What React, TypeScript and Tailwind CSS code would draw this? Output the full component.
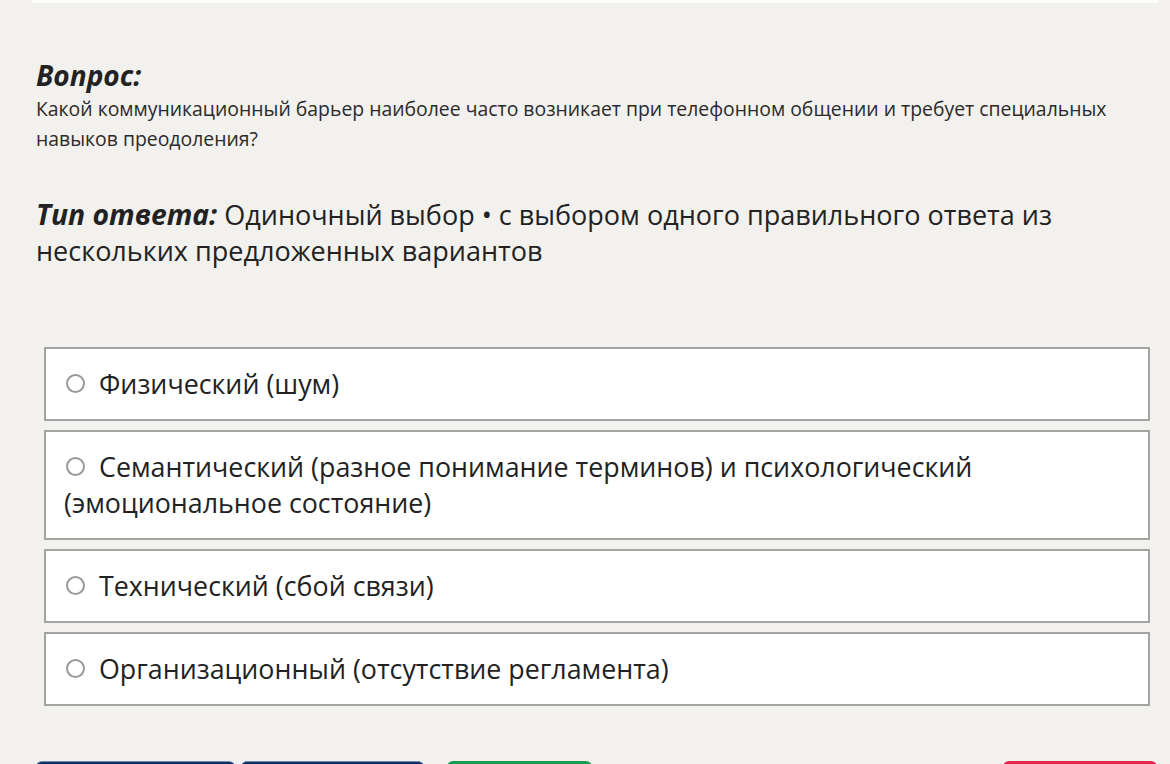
import React from "react";

const options = [
  "Физический (шум)",
  "Семантический (разное понимание терминов) и психологический (эмоциональное состояние)",
  "Технический (сбой связи)",
  "Организационный (отсутствие регламента)",
];

export default function App() {
  return (
    <div
      className="w-[1170px] h-[764px] overflow-hidden bg-[#f2f1ee] text-[#222222]"
      style={{ fontFamily: '"Open Sans", "Noto Sans", sans-serif' }}
    >
      <div className="mx-[32px] w-[1126px] h-[3px] bg-[#fdfdfb]" />
      <div className="px-[36px]">
        <h2 className="mt-[55px] text-[28px] leading-[34px] font-bold italic">
          Вопрос:
        </h2>
        <p className="mt-[2px] text-[19.4px] leading-[30px] pr-[20px] text-[#2a2a2a]">
          Какой коммуникационный барьер наиболее часто возникает при телефонном общении и требует
          специальных навыков преодоления?
        </p>
        <p className="mt-[42px] text-[27px] leading-[36px] pr-[40px]">
          <span className="font-bold italic text-[28.3px]">Тип ответа:</span>{" "}
          Одиночный выбор • с выбором одного правильного ответа из нескольких предложенных
          вариантов
        </p>
        <div className="mt-[78px] ml-[8px] w-[1106px] flex flex-col gap-[9px]">
          {options.map((o) => (
            <div
              key={o}
              className="bg-white border-2 border-[#a3a3a3] px-[18px] py-[17px] text-[26.8px] leading-[36px]"
            >
              <span className="inline-block w-[19px] h-[19px] rounded-full border-2 border-[#999999] mr-[14px] ml-[2px] align-[1px]" />
              {o}
            </div>
          ))}
        </div>
        <div className="mt-[55px] flex items-start">
          <div className="w-[199px] h-[20px] rounded-t-[6px] bg-[#0f2f5e] border-t border-[#6f8fbf]" />
          <div className="ml-[6px] w-[183px] h-[20px] rounded-t-[6px] bg-[#0f2f5e] border-t border-[#6f8fbf]" />
          <div className="ml-[23px] w-[145px] h-[20px] rounded-t-[6px] bg-[#169c4f]" />
          <div className="ml-auto mr-[-23px] w-[154px] h-[20px] rounded-t-[6px] bg-[#e5254a]" />
        </div>
      </div>
    </div>
  );
}
